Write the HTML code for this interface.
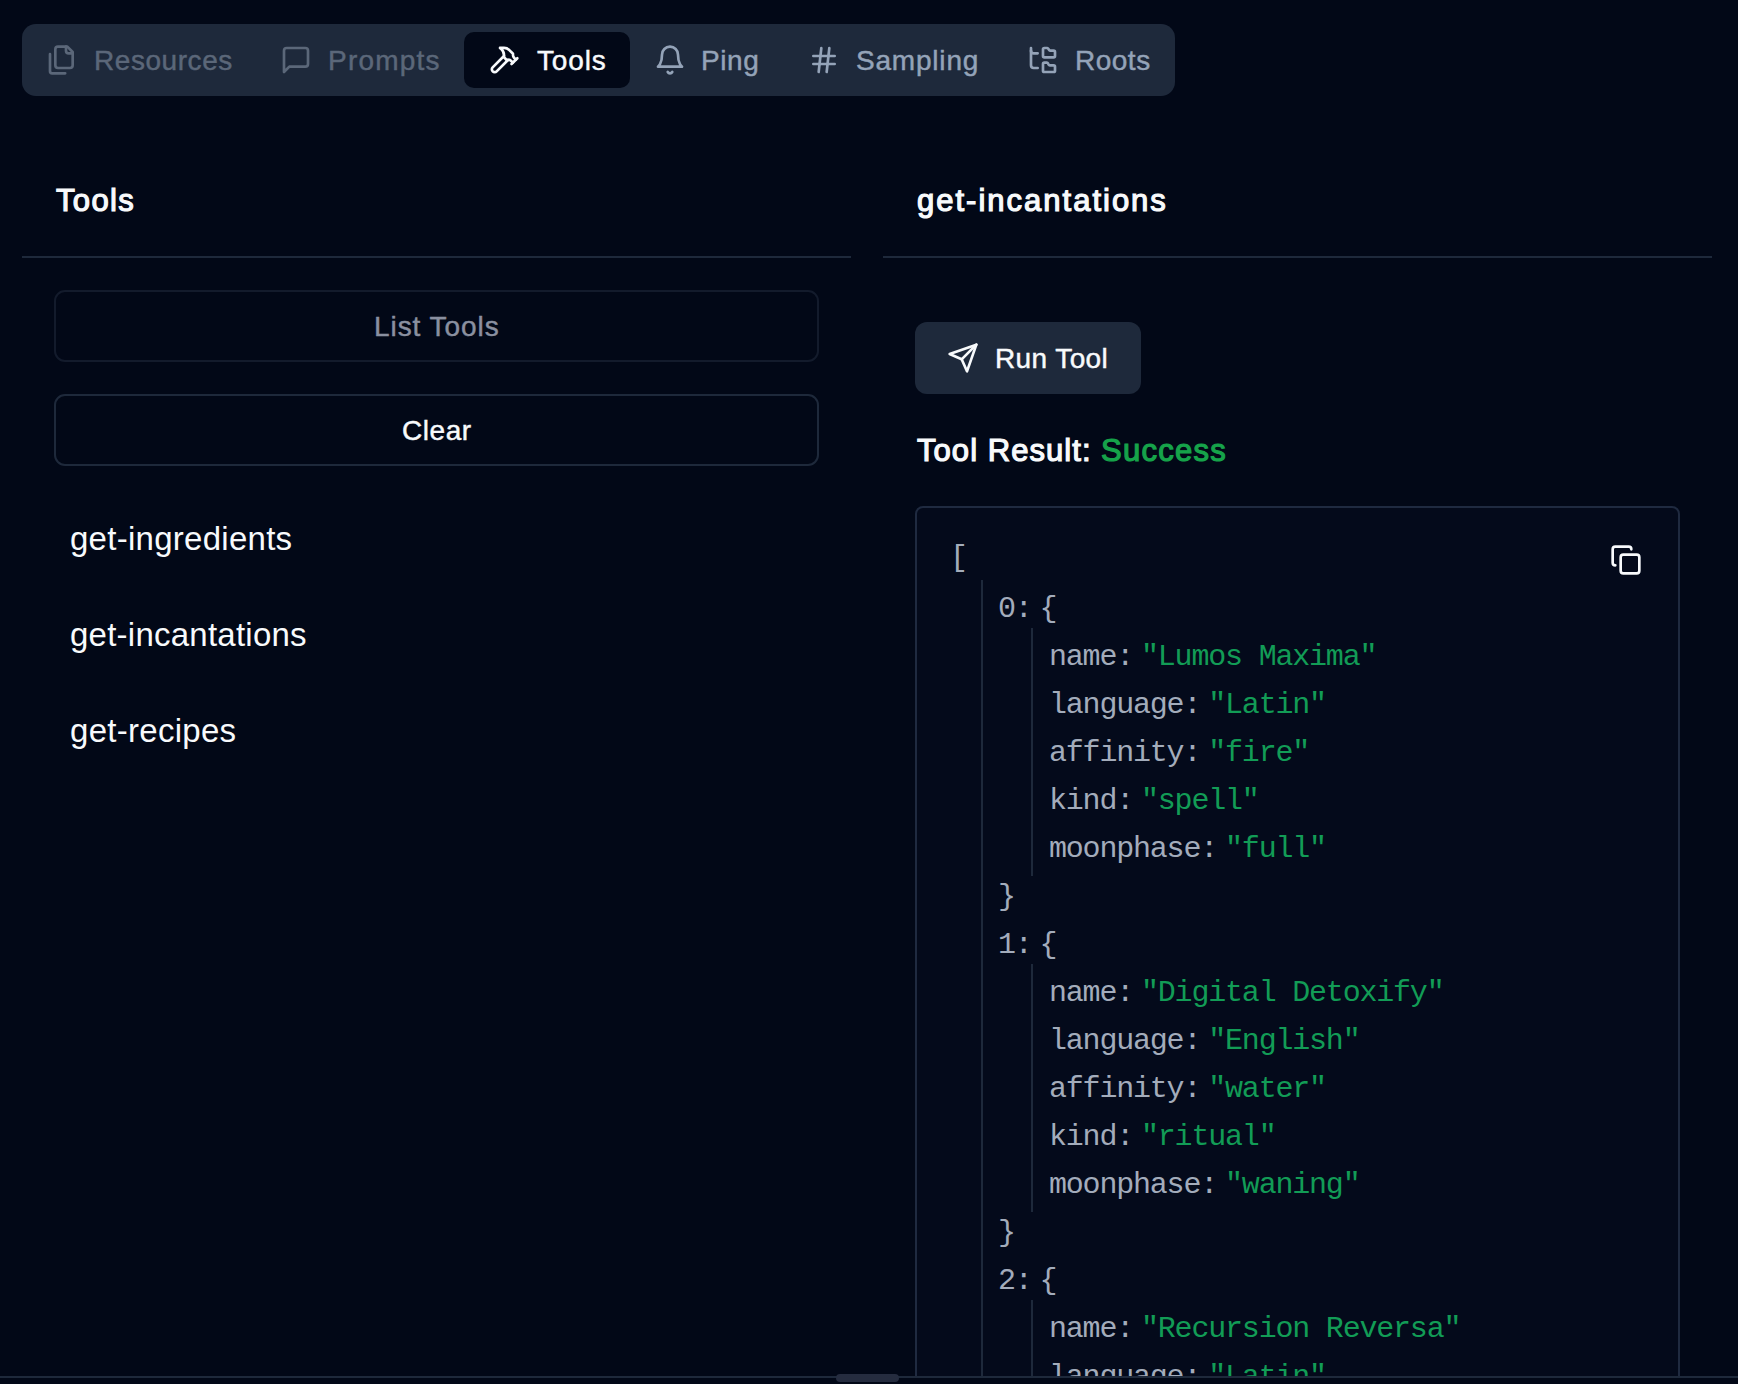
<!DOCTYPE html>
<html>
<head>
<meta charset="utf-8">
<style>
html,body{margin:0;padding:0;}
body{width:1738px;height:1384px;overflow:hidden;background:#020817;position:relative;font-family:"Liberation Sans",sans-serif;color:#f8fafc;}
.a{position:absolute;}
.t{position:absolute;white-space:pre;line-height:1;}
svg.i{position:absolute;width:32px;height:32px;fill:none;stroke:currentColor;stroke-width:2;stroke-linecap:round;stroke-linejoin:round;}
#tabs{left:22px;top:24px;width:1153px;height:72px;background:#1e293b;border-radius:14px;}
#active{left:464px;top:32px;width:166px;height:56px;background:#020817;border-radius:10px;}
.tab{font-size:28px;-webkit-text-stroke:0.45px currentColor;}
.dim{color:#5b6779;}
.mut{color:#94a3b8;}
.hr{position:absolute;height:2px;background:#1e293b;top:256px;}
.btn{position:absolute;box-sizing:border-box;border:2px solid #1e293b;border-radius:11px;}
.h{font-size:31px;font-weight:400;-webkit-text-stroke:1.2px currentColor;}
.li{font-size:33px;}
#json{left:915px;top:506px;width:765px;height:900px;box-sizing:border-box;border:2px solid #1f2a40;border-radius:8px;background:#040a1b;}
.m{position:absolute;font-family:"Liberation Mono",monospace;font-size:30px;letter-spacing:-1.2px;white-space:pre;line-height:48px;color:#a3acbb;}
.v{margin-left:8px;}
.g{color:#129c56;}
.vl{position:absolute;width:2px;background:#1e293b;}
</style>
</head>
<body>
<!-- tab bar -->
<div id="tabs" class="a"></div>
<div id="active" class="a"></div>

<svg class="i dim" style="left:46px;top:44px" viewBox="0 0 24 24"><path d="M20 7h-3a2 2 0 0 1-2-2V2"/><path d="M9 18a2 2 0 0 1-2-2V4a2 2 0 0 1 2-2h7l4 4v10a2 2 0 0 1-2 2Z"/><path d="M3 7.6v12.8A1.6 1.6 0 0 0 4.6 22h9.8"/></svg>
<div class="t tab dim" style="left:94px;top:47px;letter-spacing:0.56px">Resources</div>

<svg class="i dim" style="left:280px;top:44px" viewBox="0 0 24 24"><path d="M21 15a2 2 0 0 1-2 2H7l-4 4V5a2 2 0 0 1 2-2h14a2 2 0 0 1 2 2z"/></svg>
<div class="t tab dim" style="left:328px;top:47px;letter-spacing:1.2px">Prompts</div>

<svg class="i" style="left:488px;top:44px;color:#f8fafc" viewBox="0 0 24 24"><path d="m15 12-8.5 8.5c-.83.83-2.170.83-3 0 0 0 0 0 0 0a2.12 2.12 0 0 1 0-3L12 9"/><path d="M17.64 15 22 10.64"/><path d="m20.91 11.7-1.25-1.25c-.6-.6-.93-1.4-.93-2.25v-.86L16.01 4.6a5.56 5.56 0 0 0-3.940-1.64H9l.92.82A6.18 6.18 0 0 1 12 8.4v1.56l2 2h2.47l2.26 1.91"/></svg>
<div class="t tab" style="left:537px;top:47px;letter-spacing:0.85px">Tools</div>

<svg class="i mut" style="left:654px;top:44px" viewBox="0 0 24 24"><path d="M6 8a6 6 0 0 1 12 0c0 7 3 9 3 9H3s3-2 3-9"/><path d="M10.3 21a1.94 1.94 0 0 0 3.4 0"/></svg>
<div class="t tab mut" style="left:701px;top:47px;letter-spacing:0.6px">Ping</div>

<svg class="i mut" style="left:808px;top:44px" viewBox="0 0 24 24"><line x1="4" x2="20" y1="9" y2="9"/><line x1="4" x2="20" y1="15" y2="15"/><line x1="10" x2="8" y1="3" y2="21"/><line x1="16" x2="14" y1="3" y2="21"/></svg>
<div class="t tab mut" style="left:856px;top:47px;letter-spacing:0.8px">Sampling</div>

<svg class="i mut" style="left:1027px;top:44px" viewBox="0 0 24 24"><path d="M20 10a1 1 0 0 0 1-1V6a1 1 0 0 0-1-1h-2.5a1 1 0 0 1-.8-.4l-.9-1.2A1 1 0 0 0 15 3h-2a1 1 0 0 0-1 1v5a1 1 0 0 0 1 1Z"/><path d="M20 21a1 1 0 0 0 1-1v-3a1 1 0 0 0-1-1h-2.9a1 1 0 0 1-.88-.55l-.42-.85a1 1 0 0 0-.92-.6H13a1 1 0 0 0-1 1v5a1 1 0 0 0 1 1Z"/><path d="M3 5a2 2 0 0 0 2 2h3"/><path d="M3 3v13a2 2 0 0 0 2 2h3"/></svg>
<div class="t tab mut" style="left:1075px;top:47px;letter-spacing:0.5px">Roots</div>

<!-- left card -->
<div class="t h" style="left:56px;top:185px;letter-spacing:1.37px">Tools</div>
<div class="hr" style="left:22px;width:829px"></div>
<div class="btn" style="left:54px;top:290px;width:765px;height:72px;border-color:#131b2c"></div>
<div class="t tab" style="left:374px;top:313px;color:#8a90a0;letter-spacing:0.94px">List Tools</div>
<div class="btn" style="left:54px;top:394px;width:765px;height:72px"></div>
<div class="t tab" style="left:402px;top:417px;letter-spacing:0.55px">Clear</div>

<div class="t li" style="left:70px;top:522px;letter-spacing:0.27px">get-ingredients</div>
<div class="t li" style="left:70px;top:618px;letter-spacing:0.24px">get-incantations</div>
<div class="t li" style="left:70px;top:714px;letter-spacing:0.28px">get-recipes</div>

<!-- right card -->
<div class="t h" style="left:917px;top:185px;letter-spacing:2px">get-incantations</div>
<div class="hr" style="left:883px;width:829px"></div>

<div class="a" style="left:915px;top:322px;width:226px;height:72px;background:#1e293b;border-radius:12px"></div>
<svg class="i" style="left:947px;top:342px;color:#f8fafc" viewBox="0 0 24 24"><path d="m22 2-7 20-4-9-9-4Z"/><path d="M22 2 11 13"/></svg>
<div class="t tab" style="left:995px;top:345px;letter-spacing:0.4px">Run Tool</div>

<div class="t h" style="left:917px;top:435px;letter-spacing:1.05px">Tool Result:</div><div class="t h" style="left:1101px;top:435px;letter-spacing:1.27px;color:#16a34a">Success</div>

<div id="json" class="a"></div>
<svg class="i" style="left:1610px;top:544px;color:#f8fafc" viewBox="0 0 24 24"><rect width="14" height="14" x="8" y="8" rx="2" ry="2"/><path d="M4 16c-1.1 0-2-.9-2-2V4c0-1.1.9-2 2-2h10c1.1 0 2 .9 2 2"/></svg>

<div class="vl" style="left:981px;top:580px;height:796px"></div>
<div class="vl" style="left:1031px;top:628px;height:248px"></div>
<div class="vl" style="left:1031px;top:964px;height:248px"></div>
<div class="vl" style="left:1031px;top:1300px;height:76px"></div>

<div class="m" style="left:950px;top:534px">[</div>
<div class="m" style="left:998px;top:585px">0:<span class="v ">{</span></div>
<div class="m" style="left:1049px;top:633px">name:<span class="v g">"Lumos Maxima"</span></div>
<div class="m" style="left:1049px;top:681px">language:<span class="v g">"Latin"</span></div>
<div class="m" style="left:1049px;top:729px">affinity:<span class="v g">"fire"</span></div>
<div class="m" style="left:1049px;top:777px">kind:<span class="v g">"spell"</span></div>
<div class="m" style="left:1049px;top:825px">moonphase:<span class="v g">"full"</span></div>
<div class="m" style="left:998px;top:873px">}</div>
<div class="m" style="left:998px;top:921px">1:<span class="v ">{</span></div>
<div class="m" style="left:1049px;top:969px">name:<span class="v g">"Digital Detoxify"</span></div>
<div class="m" style="left:1049px;top:1017px">language:<span class="v g">"English"</span></div>
<div class="m" style="left:1049px;top:1065px">affinity:<span class="v g">"water"</span></div>
<div class="m" style="left:1049px;top:1113px">kind:<span class="v g">"ritual"</span></div>
<div class="m" style="left:1049px;top:1161px">moonphase:<span class="v g">"waning"</span></div>
<div class="m" style="left:998px;top:1209px">}</div>
<div class="m" style="left:998px;top:1257px">2:<span class="v ">{</span></div>
<div class="m" style="left:1049px;top:1305px">name:<span class="v g">"Recursion Reversa"</span></div>
<div class="m" style="left:1049px;top:1353px">language:<span class="v g">"Latin"</span></div>

<!-- bottom -->
<div class="a" style="left:0;top:1376px;width:1738px;height:8px;background:#020817"></div>
<div class="a" style="left:0;top:1376px;width:1738px;height:2px;background:#1e293b"></div>
<div class="a" style="left:836px;top:1374px;width:63px;height:8px;background:#252c3f;border-radius:4px"></div>
</body>
</html>
